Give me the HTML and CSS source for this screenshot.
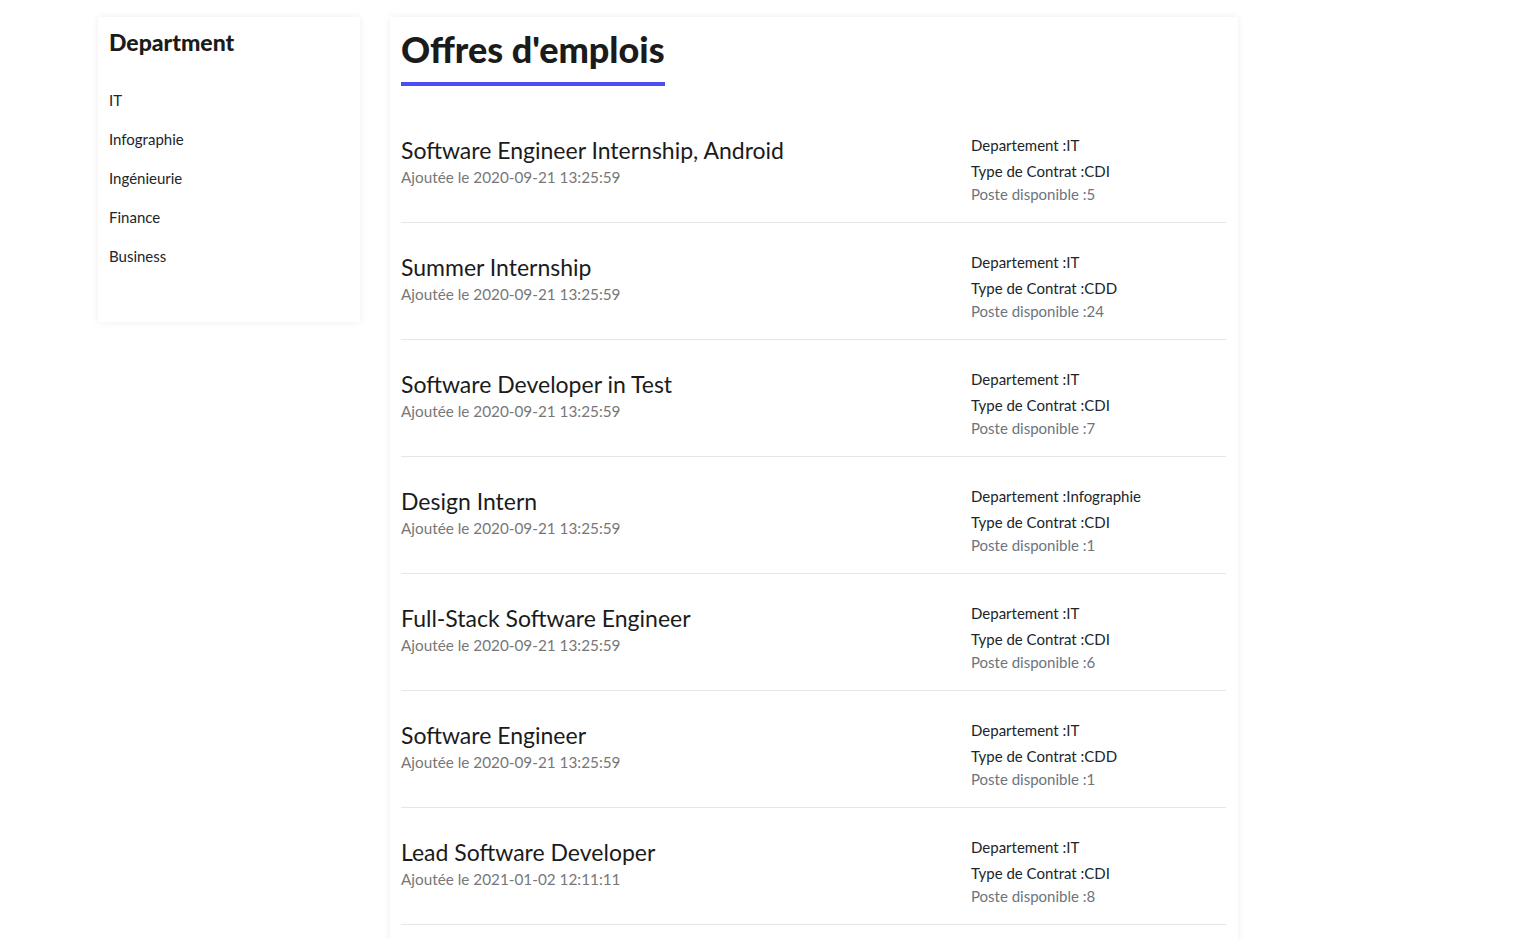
FILE: index.html
```html
<!DOCTYPE html>
<html lang="fr">
<head>
<meta charset="utf-8">
<title>Offres d'emplois</title>
<link rel="stylesheet" href="styles.css">
</head>
<body>
<div class="page">
  <aside class="card sidebar">
    <h2 class="side-title">Department</h2>
    <ul class="dept-list">
      <li>IT</li>
      <li>Infographie</li>
      <li>Ingénieurie</li>
      <li>Finance</li>
      <li>Business</li>
    </ul>
  </aside>
  <main class="card main">
    <h1 class="main-title">Offres d'emplois</h1>
    <div class="jobs">
      <div class="job">
        <div class="job-left"><div class="job-title">Software Engineer Internship, Android</div><div class="job-date">Ajoutée le 2020-09-21 13:25:59</div></div>
        <div class="job-right"><div class="meta">Departement :IT</div><div class="meta">Type de Contrat :CDI</div><div class="meta muted">Poste disponible :5</div></div>
      </div>
      <div class="job">
        <div class="job-left"><div class="job-title">Summer Internship</div><div class="job-date">Ajoutée le 2020-09-21 13:25:59</div></div>
        <div class="job-right"><div class="meta">Departement :IT</div><div class="meta">Type de Contrat :CDD</div><div class="meta muted">Poste disponible :24</div></div>
      </div>
      <div class="job">
        <div class="job-left"><div class="job-title">Software Developer in Test</div><div class="job-date">Ajoutée le 2020-09-21 13:25:59</div></div>
        <div class="job-right"><div class="meta">Departement :IT</div><div class="meta">Type de Contrat :CDI</div><div class="meta muted">Poste disponible :7</div></div>
      </div>
      <div class="job">
        <div class="job-left"><div class="job-title">Design Intern</div><div class="job-date">Ajoutée le 2020-09-21 13:25:59</div></div>
        <div class="job-right"><div class="meta">Departement :Infographie</div><div class="meta">Type de Contrat :CDI</div><div class="meta muted">Poste disponible :1</div></div>
      </div>
      <div class="job">
        <div class="job-left"><div class="job-title">Full-Stack Software Engineer</div><div class="job-date">Ajoutée le 2020-09-21 13:25:59</div></div>
        <div class="job-right"><div class="meta">Departement :IT</div><div class="meta">Type de Contrat :CDI</div><div class="meta muted">Poste disponible :6</div></div>
      </div>
      <div class="job">
        <div class="job-left"><div class="job-title">Software Engineer</div><div class="job-date">Ajoutée le 2020-09-21 13:25:59</div></div>
        <div class="job-right"><div class="meta">Departement :IT</div><div class="meta">Type de Contrat :CDD</div><div class="meta muted">Poste disponible :1</div></div>
      </div>
      <div class="job">
        <div class="job-left"><div class="job-title">Lead Software Developer</div><div class="job-date">Ajoutée le 2021-01-02 12:11:11</div></div>
        <div class="job-right"><div class="meta">Departement :IT</div><div class="meta">Type de Contrat :CDI</div><div class="meta muted">Poste disponible :8</div></div>
      </div>
    </div>
  </main>
</div>
</body>
</html>
```

FILE: styles.css
```css
html, body {
  margin: 0;
  padding: 0;
  background: #fff;
}
body {
  font-family: Lato, "Open Sans", sans-serif;
  color: #212529;
}
.page {
  display: flex;
  align-items: flex-start;
  gap: 30px;
  padding: 17px 0 0 98px;
}
.card {
  background: #fff;
  box-shadow: 0 0 8px rgba(0, 0, 0, 0.07);
}
.sidebar {
  width: 262px;
  height: 305px;
  box-sizing: border-box;
  padding: 10px 11px;
}
.side-title {
  margin: 0;
  font-size: 23px;
  font-weight: 900;
  line-height: 30px;
  color: #1b1b1b;
}
.dept-list {
  list-style: none;
  margin: 24px 0 0;
  padding: 0;
}
.dept-list li {
  font-size: 15px;
  line-height: 39px;
  height: 39px;
}
.main {
  width: 848px;
  box-sizing: border-box;
  padding: 11px 12px 20px 11px;
}
.main-title {
  display: inline-block;
  margin: 0;
  font-size: 36px;
  font-weight: 900;
  line-height: 42px;
  color: #1b1b1b;
  padding-bottom: 12px;
  border-bottom: 4px solid #4b4ef0;
}
.jobs {
  margin-top: 20px;
}
.job {
  display: flex;
  height: 117px;
  box-sizing: border-box;
  border-bottom: 1px solid #e6e6e6;
  padding-top: 28px;
}
.job-left {
  flex: 0 0 570px;
}
.job-title {
  font-size: 23px;
  line-height: 33px;
  color: #1b1b1b;
}
.job-date {
  font-size: 15.3px;
  line-height: 20px;
  color: #777;
}
.job-right {
  margin-top: -2px;
}
.meta {
  font-size: 15px;
  line-height: 26px;
  height: 26px;
}
.meta:nth-child(3) {
  line-height: 20px;
  height: 20px;
}
.muted {
  color: #6c757d;
}
```
